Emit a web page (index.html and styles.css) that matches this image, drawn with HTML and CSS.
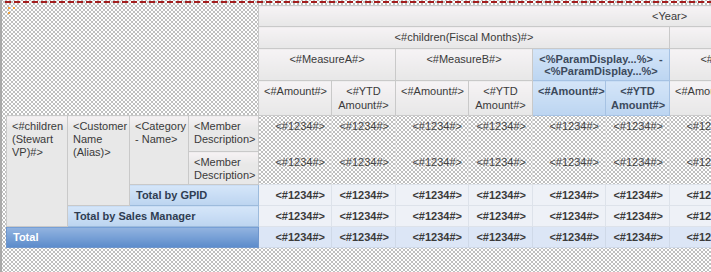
FILE: index.html
```html
<!DOCTYPE html>
<html lang="en">
<head>
    <meta charset="UTF-8">
    <title>Pivot Layout</title>
    <link rel="stylesheet" href="styles.css">
</head>
<body>
    <div class="canvas">
        <div class="handle"><span></span><span></span><span></span></div>

        <table class="pivot">
            <colgroup>
                <col class="rh1"><col class="rh2"><col class="rh3"><col class="rh4">
                <col class="amt"><col class="ytd"><col class="amt"><col class="ytd"><col class="amt"><col class="ytd">
                <col class="amt"><col class="ytd"><col class="amt"><col class="ytd"><col class="amt"><col class="ytd">
            </colgroup>
            <thead>
                <tr class="r1">
                    <th class="corner" colspan="4" rowspan="4"></th>
                    <th class="hd" colspan="12">&lt;Year&gt;</th>
                </tr>
                <tr class="r2">
                    <th class="hd" colspan="6">&lt;#children(Fiscal Months)#&gt;</th>
                    <th class="hd" colspan="6"></th>
                </tr>
                <tr class="r3">
                    <th class="hd" colspan="2">&lt;#MeasureA#&gt;</th>
                    <th class="hd" colspan="2">&lt;#MeasureB#&gt;</th>
                    <th class="hd sel" colspan="2">&lt;%ParamDisplay...%&gt;&nbsp; -<br>&lt;%ParamDisplay...%&gt;</th>
                    <th class="hd" colspan="2">&lt;#MeasureA#&gt;</th>
                    <th class="hd" colspan="2">&lt;#MeasureB#&gt;</th>
                    <th class="hd" colspan="2"></th>
                </tr>
                <tr class="r4">
                    <th class="hd">&lt;#Amount#&gt;</th>
                    <th class="hd">&lt;#YTD<br>Amount#&gt;</th>
                    <th class="hd">&lt;#Amount#&gt;</th>
                    <th class="hd">&lt;#YTD<br>Amount#&gt;</th>
                    <th class="hd sel">&lt;#Amount#&gt;</th>
                    <th class="hd sel">&lt;#YTD<br>Amount#&gt;</th>
                    <th class="hd">&lt;#Amount#&gt;</th>
                    <th class="hd">&lt;#YTD<br>Amount#&gt;</th>
                    <th class="hd">&lt;#Amount#&gt;</th>
                    <th class="hd">&lt;#YTD<br>Amount#&gt;</th>
                    <th class="hd">&lt;#Amount#&gt;</th>
                    <th class="hd">&lt;#YTD<br>Amount#&gt;</th>
                </tr>
            </thead>
            <tbody>
                <tr class="ra">
                    <th class="rh" rowspan="4">&lt;#children<br>(Stewart<br>VP)#&gt;</th>
                    <th class="rh" rowspan="3">&lt;Customer<br>Name<br>(Alias)&gt;</th>
                    <th class="rh" rowspan="2">&lt;Category<br>- Name&gt;</th>
                    <th class="rh">&lt;Member<br>Description&gt;</th>
                    <td>&lt;#1234#&gt;</td><td>&lt;#1234#&gt;</td><td>&lt;#1234#&gt;</td><td>&lt;#1234#&gt;</td>
                    <td>&lt;#1234#&gt;</td><td>&lt;#1234#&gt;</td><td>&lt;#1234#&gt;</td><td>&lt;#1234#&gt;</td>
                    <td>&lt;#1234#&gt;</td><td>&lt;#1234#&gt;</td><td>&lt;#1234#&gt;</td><td>&lt;#1234#&gt;</td>
                </tr>
                <tr class="rb">
                    <th class="rh">&lt;Member<br>Description&gt;</th>
                    <td>&lt;#1234#&gt;</td><td>&lt;#1234#&gt;</td><td>&lt;#1234#&gt;</td><td>&lt;#1234#&gt;</td>
                    <td>&lt;#1234#&gt;</td><td>&lt;#1234#&gt;</td><td>&lt;#1234#&gt;</td><td>&lt;#1234#&gt;</td>
                    <td>&lt;#1234#&gt;</td><td>&lt;#1234#&gt;</td><td>&lt;#1234#&gt;</td><td>&lt;#1234#&gt;</td>
                </tr>
                <tr class="sub">
                    <th class="tot" colspan="2">Total by GPID</th>
                    <td>&lt;#1234#&gt;</td><td>&lt;#1234#&gt;</td><td>&lt;#1234#&gt;</td><td>&lt;#1234#&gt;</td>
                    <td>&lt;#1234#&gt;</td><td>&lt;#1234#&gt;</td><td>&lt;#1234#&gt;</td><td>&lt;#1234#&gt;</td>
                    <td>&lt;#1234#&gt;</td><td>&lt;#1234#&gt;</td><td>&lt;#1234#&gt;</td><td>&lt;#1234#&gt;</td>
                </tr>
                <tr class="sub">
                    <th class="tot" colspan="3">Total by Sales Manager</th>
                    <td>&lt;#1234#&gt;</td><td>&lt;#1234#&gt;</td><td>&lt;#1234#&gt;</td><td>&lt;#1234#&gt;</td>
                    <td>&lt;#1234#&gt;</td><td>&lt;#1234#&gt;</td><td>&lt;#1234#&gt;</td><td>&lt;#1234#&gt;</td>
                    <td>&lt;#1234#&gt;</td><td>&lt;#1234#&gt;</td><td>&lt;#1234#&gt;</td><td>&lt;#1234#&gt;</td>
                </tr>
                <tr class="grand">
                    <th class="gtot" colspan="4">Total</th>
                    <td>&lt;#1234#&gt;</td><td>&lt;#1234#&gt;</td><td>&lt;#1234#&gt;</td><td>&lt;#1234#&gt;</td>
                    <td>&lt;#1234#&gt;</td><td>&lt;#1234#&gt;</td><td>&lt;#1234#&gt;</td><td>&lt;#1234#&gt;</td>
                    <td>&lt;#1234#&gt;</td><td>&lt;#1234#&gt;</td><td>&lt;#1234#&gt;</td><td>&lt;#1234#&gt;</td>
                </tr>
            </tbody>
        </table>
    </div>
</body>
</html>
```

FILE: styles.css
```css
* {
    margin: 0;
    padding: 0;
    box-sizing: border-box;
}

html, body {
    width: 711px;
    height: 272px;
    overflow: hidden;
    background: #fff;
}

body {
    font-family: "Liberation Sans", Arial, sans-serif;
    font-size: 11px;
    color: #333;
}

/* dotted design surface */
.canvas {
    position: relative;
    width: 711px;
    height: 272px;
    border-left: 2px solid #a9a9a9;
    padding: 5px 0 0 4px;
    background-color: #fff;
    background-image:
        radial-gradient(circle, #bdbdbd 0.7px, transparent 0.9px),
        radial-gradient(circle, #bdbdbd 0.7px, transparent 0.9px);
    background-size: 4px 4px;
    background-position: 0 0, 2px 2px;
    overflow: hidden;
}

.canvas::before {
    content: "";
    position: absolute;
    top: 1px;
    left: 3px;
    right: 0;
    height: 2px;
    background: repeating-linear-gradient(90deg, #a31d1d 0 6px, transparent 6px 9px);
}

.handle {
    position: absolute;
    top: 7px;
    left: 6px;
    width: 8px;
    height: 8px;
}

.handle span {
    position: absolute;
    width: 2px;
    height: 2px;
    background: #f0a23c;
}

.handle span:nth-child(1) { top: 0; left: 0; }
.handle span:nth-child(2) { top: 0; left: 5px; }
.handle span:nth-child(3) { top: 5px; left: 0; }

/* pivot table */
.pivot {
    border-collapse: collapse;
    table-layout: fixed;
    width: 1072px;
}

.rh1 { width: 61px; }
.rh2 { width: 62px; }
.rh3 { width: 59px; }
.rh4 { width: 70px; }
.amt { width: 73px; }
.ytd { width: 64px; }

.r1 { height: 21px; }
.r2 { height: 22px; }
.r3 { height: 32px; }
.r4 { height: 35px; }
.ra { height: 36px; }
.rb { height: 33px; }
.sub, .grand { height: 21px; }

th, td {
    font-weight: normal;
    line-height: 13px;
    vertical-align: top;
    padding: 4px 5px 0;
    white-space: nowrap;
}

.corner {
    background: transparent;
    border: none;
}

.hd {
    text-align: center;
    line-height: 12px;
    color: #3a3a3a;
    background: linear-gradient(#f6f3f5, #e7e7e7);
    border: 1px solid #c9c9c9;
}

.r4 .hd {
    line-height: 14px;
    padding-top: 3px;
}

.hd.sel {
    font-weight: bold;
    color: #3c4a5c;
    background: linear-gradient(#d4e5f8, #bcd5f1);
    border-color: #a6c2e3;
}

.rh {
    text-align: left;
    color: #3a3a3a;
    background: linear-gradient(#f6f2f4 0, #e8e8e8 12px, #e8e8e8);
    border: 1px solid #c9c9c9;
}

td {
    text-align: right;
    padding-right: 6px;
    color: #444;
    border-left: 1px solid #e0e0e0;
    border-right: 1px solid #e0e0e0;
}

.tot {
    text-align: left;
    font-weight: bold;
    color: #2f3d52;
    padding-left: 6px;
    background: linear-gradient(#d5e6f9, #bcd4f0);
    border: 1px solid #9dbbdc;
}

.gtot {
    text-align: left;
    font-weight: bold;
    color: #fff;
    padding-left: 6px;
    background: linear-gradient(#93b4e0, #5b8bcb);
    border: 1px solid #6f96cc;
}

.sub td {
    font-weight: bold;
    color: #3a3a3a;
    background: #eef1f7;
    border: 1px solid #dde2ea;
}

.grand td {
    font-weight: bold;
    color: #3a3a3a;
    background: #dce6f6;
    border: 1px solid #cfd9e8;
}
```
